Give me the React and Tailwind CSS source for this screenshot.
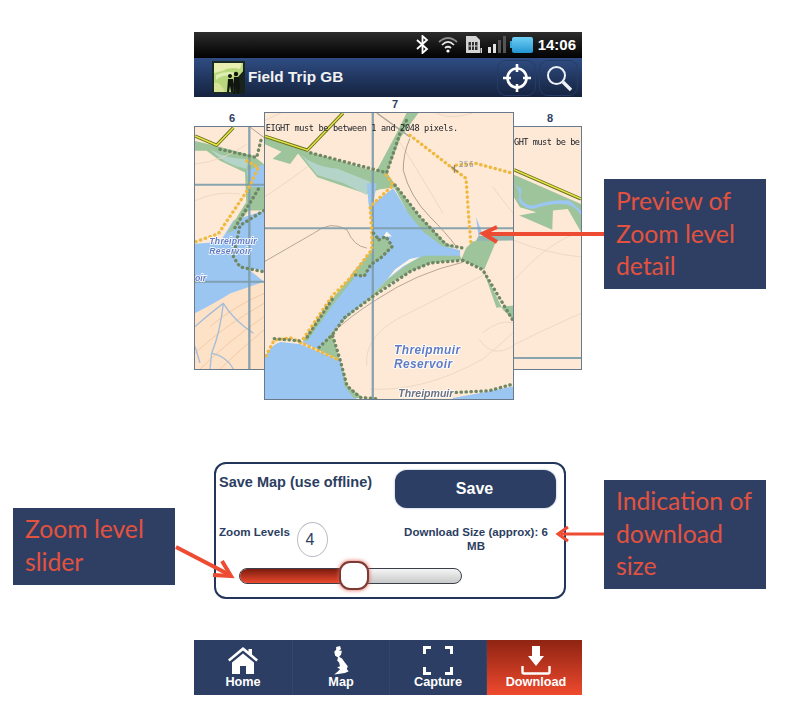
import React from "react";

const WATER = "#9cc6f2";
const GREEN = "#9dc49a";
const BG = "#fde9d6";
const DOT = "#6f8763";
const ORG = "#efb93f";
const GRID = "#7d9dab";

function Line({ d, c = DOT, w = 10, dash = "1 14", fill = "none" }) {
  return <path d={d} fill={fill} stroke={c} strokeWidth={w} strokeDasharray={dash} strokeLinecap="round" strokeLinejoin="round" />;
}

function Contour({ d, c = "#e9d5c0", w = 2.5 }) {
  return <path d={d} fill="none" stroke={c} strokeWidth={w} />;
}

function Road({ d }) {
  return (
    <g fill="none" strokeLinejoin="round">
      <path d={d} stroke="#66701c" strokeWidth="10" />
      <path d={d} stroke="#e7e544" strokeWidth="4.5" />
    </g>
  );
}

function MapCentre() {
  return (
    <svg viewBox="222 38 750 862" preserveAspectRatio="none" className="block w-full h-full blur-[0.35px]">
      <rect x="222" y="38" width="750" height="862" fill={BG} />
      <Contour d="M222 60 L270 38 M740 38 Q780 60 850 38 M880 700 Q930 660 972 670 M530 800 Q520 720 620 660 Q760 590 895 520 M910 260 Q940 300 972 340 M870 720 Q910 780 972 740 M540 870 Q700 880 880 780 Q930 740 972 700" />
      <Contour d="M222 290 Q300 240 390 170 M620 110 Q690 220 760 340" c="#e8d4c0" />
      <path d="M222 110 L350 155 L550 212 L590 218 L622 262 L570 268 L530 282 L380 232 L322 160 L298 192 L245 176 L272 155 L222 132 Z" fill={GREEN} />
      <path d="M330 162 Q370 200 440 205 L540 245 L530 285 L460 250 L380 225 Z" fill="#b4d3c9" />
      <path d="M558 215 L622 95 L650 38 L686 38 L632 112 L592 218 Z" fill={GREEN} />
      <path d="M222 775 Q240 735 270 728 L330 735 L450 785 L465 860 L500 900 L222 900 Z" fill={WATER} />
      <path d="M530 250 L560 250 L550 310 L610 265 L650 330 L700 385 L770 440 L812 452 L812 470 L702 470 L662 490 L592 540 L547 585 L502 625 L427 695 L382 750 L335 730 L432 595 L482 530 L547 450 L547 385 L535 310 Z" fill={WATER} />
      <path d="M610 258 L622 262 L690 350 L770 430 L800 445 L760 440 L700 395 L655 340 Z" fill={GREEN} />
      <path d="M547 405 L567 420 L587 410 L607 440 L572 475 L542 495 L522 530 L482 525 L547 450 Z" fill={GREEN} />
      <path d="M850 425 L925 415 L885 510 L815 480 L830 445 Z" fill={GREEN} />
      <path d="M812 468 L702 468 L662 488 L592 540 L547 585 L502 625 L427 695 L382 752 L447 782 L427 710 L437 690 L462 655 L547 592 L587 560 L662 515 L722 490 L817 480 Z" fill={GREEN} />
      <path d="M592 538 L640 500 L690 472 L660 478 L615 510 Z" fill="#fff6e8" />
      <path d="M482 530 L432 590 L337 725 L350 725 L432 610 L492 535 Z" fill={GREEN} />
      <path d="M880 505 L922 625 L972 618 L972 660 L942 632 Z" fill={GREEN} />
      <path d="M450 785 L470 860 L520 897 L490 897 L462 860 Z" fill={GREEN} />
      <path d="M790 897 Q880 882 972 862 L972 900 L790 900 Z" fill={WATER} />
      <path d="M590 395 L606 410 L580 410 Z" fill="#fff8ee" />
      <path d="M860 350 L878 398 L868 412 Z" fill={WATER} />
      <path d="M868 408 L972 408 L972 422 L860 424 Z" fill="#8fb7b0" />
      <Contour d="M222 485 Q300 440 370 400 Q420 360 470 390 Q490 440 530 445" c="#a89a88" />
      <Contour d="M660 115 Q640 160 640 210 Q660 290 720 350 Q770 400 800 440" c="#a28f80" />
      <Contour d="M427 700 Q480 650 560 600 Q680 520 820 488" c="#ab9a86" />
      <path d="M548 38 V900" stroke={GRID} strokeWidth="7" opacity="0.9" />
      <path d="M222 385 H972" stroke={GRID} strokeWidth="6" opacity="0.9" />
      <path d="M560 38 L660 110" stroke="#a9a39a" strokeWidth="4" fill="none" />
      <Road d="M222 108 L350 150 L458 38" />
      <Line c={ORG} d="M660 105 L790 205 L830 235 L838 350 L845 435 M800 195 L860 190 L972 220 M590 225 L610 255 L540 320 L545 400 L545 450 L480 535 L425 590 L330 730 M225 770 L250 722 L300 716 L450 785" />
      <Line d="M360 158 L590 218 L630 100 L650 60 M615 255 L690 350 L770 435 L820 445 M567 420 L587 410 L607 440 L572 475 L542 495 L522 530 L482 525 M550 400 L567 420 M820 482 L722 490 L662 515 L547 592 L462 655 L427 705 L385 745 M425 600 L345 720 M820 482 L880 510 L970 660 M427 710 L450 785 L470 860 L510 895 L560 899 M800 880 L900 875 L972 855 M250 718 L330 725" />
      <path d="M785 200 L805 215 M795 195 L795 218" stroke="#8d8560" strokeWidth="4" />
      <text x="808" y="202" fontSize="24" fill="#8d9aa0" fontFamily="'DejaVu Sans Mono', monospace" letterSpacing="1">256</text>
      <text x="224" y="92" fontSize="26" fill="#20242a" fontFamily="'DejaVu Sans Mono', monospace" textLength="582">EIGHT must be between 1 and 2048 pixels.</text>
      <g fontFamily="'Liberation Sans', sans-serif" fontStyle="italic" fontWeight="700" stroke="#fff" strokeWidth="5" paintOrder="stroke">
        <text x="612" y="765" fontSize="36" fill="#5f7bc4" textLength="200">Threipmuir</text>
        <text x="612" y="808" fontSize="36" fill="#5f7bc4" textLength="176">Reservoir</text>
        <text x="625" y="894" fontSize="32" fill="#6c7180">Threipmuir</text>
      </g>
    </svg>
  );
}

function MapLeft() {
  return (
    <svg viewBox="15 78 207 730" preserveAspectRatio="none" className="block w-full h-full blur-[0.35px]">
      <rect x="15" y="78" width="207" height="730" fill={BG} />
      <path d="M15 120 L80 135 L190 165 L222 190 L222 330 L170 330 L165 215 L90 180 L50 150 L15 150 Z" fill={GREEN} />
      <path d="M170 210 L222 190 L222 260 L180 260 Z" fill={WATER} />
      <path d="M60 145 Q110 175 175 175 L170 205 Q100 190 60 145 Z" fill="#b4d3c9" />
      <path d="M15 430 L90 425 L130 360 L222 330 L222 510 L150 500 L130 470 L222 545 L222 545 L15 640 Z" fill={WATER} />
      <path d="M110 400 L165 310 L205 265 L205 290 L130 390 Z" fill={GREEN} />
      <path d="M15 640 Q90 600 120 580 L222 545 L222 808 L15 808 Z" fill="#fde2c8" />
      <g fill="none" strokeWidth="2.5" stroke="#f1c49d">
        <path d="M15 760 Q100 680 222 610 M30 808 Q120 720 222 650 M90 808 Q150 750 222 690 M60 680 Q130 620 222 580" />
      </g>
      <g fill="none" strokeWidth="4" stroke="#a7bdd5">
        <path d="M15 680 Q60 640 100 610 Q130 660 190 700 M100 610 Q90 700 65 760 L60 808 M65 760 Q110 770 130 808 M15 740 L30 790" />
      </g>
      <Contour d="M15 190 Q100 180 170 130 M15 300 Q80 270 150 280" />
      <path d="M178 78 V808" stroke={GRID} strokeWidth="7" opacity="0.9" />
      <path d="M15 252 H222 M15 545 H222" stroke={GRID} strokeWidth="6" opacity="0.9" />
      <path d="M180 78 L222 110" stroke="#a9a39a" strokeWidth="3" fill="none" />
      <Road d="M15 105 L80 133 L130 80" />
      <Line c={ORG} d="M170 180 L205 200 L175 265 L85 400 L15 425" />
      <Line d="M90 145 L200 170 L215 110 M205 265 L130 390 M222 330 L150 375 L130 470 L150 500 L222 515" />
      <g fontFamily="'Liberation Sans', sans-serif" fontStyle="italic" fontWeight="700" stroke="#fff" strokeWidth="4" paintOrder="stroke" fill="#5f7bc4" fontSize="26">
        <text x="58" y="431" textLength="142">Threipmuir</text>
        <text x="58" y="461" textLength="125">Reservoir</text>
        <text x="15" y="542">oir</text>
      </g>
    </svg>
  );
}

function MapRight() {
  return (
    <svg viewBox="972 78 203 730" preserveAspectRatio="none" className="block w-full h-full blur-[0.35px]">
      <rect x="972" y="78" width="203" height="730" fill={BG} />
      <path d="M972 222 L1175 310 L1175 395 L1135 325 L1090 330 L1088 388 L988 345 L1040 335 L990 320 L972 290 Z" fill={GREEN} />
      <path d="M972 250 Q995 270 985 300 Q1000 325 1030 325 Q1090 305 1135 312 Q1160 320 1175 345 L1175 330 L1140 300 Q1090 295 1030 315 Q1000 315 992 290 L995 265 Z" fill={WATER} />
      <Contour d="M972 540 Q1080 420 1175 395 M1175 640 Q1060 690 880 780 M972 420 Q1070 460 1175 470" />
      <path d="M972 775 H1175" stroke={GRID} strokeWidth="6" opacity="0.9" />
      <Road d="M972 207 L1175 295" />
      <text x="972" y="132" fontSize="26" fill="#20242a" fontFamily="'DejaVu Sans Mono', monospace" textLength="200">GHT must be be</text>
    </svg>
  );
}

function Logo() {
  return (
    <svg viewBox="0 0 33 33" className="w-[33px] h-[33px] block">
      <rect width="33" height="33" fill="#b9d77d" />
      <path d="M2 2 H30 L28 8 Q18 5 10 10 L2 12 Z" fill="#e8efb0" />
      <path d="M4 14 Q14 9 24 12 L20 15 Q10 13 4 19 Z" fill="#dfeeb4" />
      <path d="M2 22 Q8 20 13 31 H2 Z" fill="#d8e39a" />
      <path d="M0 0 H33 V33 H0 Z M2 2 V31 H31 V2 Z" fill="#1c2a24" fillRule="evenodd" />
      <path d="M33 8 V33 H21 L26 16 Z" fill="#17231c" />
      <circle cx="18" cy="15" r="2" fill="#10160f" />
      <path d="M16 18 h5 l1 6 l-1 7 h-2 l-1 -6 l-1 6 h-2 Z" fill="#10160f" />
      <circle cx="24" cy="13" r="2.2" fill="#10160f" />
      <path d="M22 16 h5 l1 9 l-1 8 h-2 l-1 -8 l-1 8 h-2 Z" fill="#10160f" />
    </svg>
  );
}

function StatusIcons() {
  return (
    <>
      <svg viewBox="0 0 13 19" className="w-[13px] h-[19px]" fill="none" stroke="#fff" strokeWidth="1.8">
        <path d="M1 5 L11 14 L6.5 18 V1 L11 5 L1 14" />
      </svg>
      <svg viewBox="0 0 20 17" className="w-[20px] h-[17px] ml-[9px]" fill="none" stroke="#e8e8e8" strokeWidth="1.7">
        <path d="M1 6 Q10 -2 19 6" stroke="#8b8b8b" />
        <path d="M4 9 Q10 3 16 9" />
        <path d="M7 12 Q10 9.5 13 12" />
        <circle cx="10" cy="15" r="1.6" fill="#fff" stroke="none" />
      </svg>
      <svg viewBox="0 0 16 17" className="w-[16px] h-[17px] ml-[8px]">
        <path d="M0 0 H10 L14 4 V17 H0 Z" fill="#d4d4d4" />
        <rect x="2.5" y="6" width="9" height="8" fill="#303030" />
        <path d="M5.5 6 V14 M8.5 6 V14 M2.5 10 H11.5" stroke="#d4d4d4" strokeWidth="1" />
        <rect x="14.5" y="12" width="1.5" height="5" fill="#d4d4d4" />
      </svg>
      <svg viewBox="0 0 19 17" className="w-[19px] h-[17px] ml-[6px]">
        <rect x="0" y="11" width="3" height="6" fill="#e0e0e0" />
        <rect x="5" y="8" width="3" height="9" fill="#e0e0e0" />
        <rect x="10" y="4" width="3" height="13" fill="#555" />
        <rect x="15" y="0" width="3" height="17" fill="#555" />
      </svg>
      <div className="ml-[3px] flex items-center">
        <div className="w-[2px] h-[7px] bg-[#38a9dc]" />
        <div className="w-[21px] h-[16px] rounded-[2px] bg-gradient-to-b from-[#6fd0f5] to-[#1f95d2]" />
      </div>
      <span className="ml-[5px] text-[15px] font-bold text-white leading-none">14:06</span>
    </>
  );
}

function HeaderBtn({ children }) {
  return <div className="w-[39px] h-[36px] rounded-[9px] border border-[#263c64] flex items-center justify-center">{children}</div>;
}

function Arrows() {
  const c = "#ee4b33";
  return (
    <svg viewBox="0 0 786 721" className="absolute inset-0 w-[786px] h-[721px] pointer-events-none" fill="none" stroke={c}>
      <path d="M604 234 H486" strokeWidth="4" />
      <path d="M497 227 L483 233.5 L497 242" strokeWidth="4" />
      <path d="M604 534 H561" strokeWidth="3" />
      <path d="M568 527 L558 534 L568 541" strokeWidth="3" />
      <path d="M176 547 L228 574" strokeWidth="4" />
      <path d="M222 561 L231 576 L213 575" strokeWidth="4" />
    </svg>
  );
}

function Note({ className, lines }) {
  return (
    <div className={"absolute bg-[#2f3f63] text-[#e2523f] text-[24.7px] leading-[32.5px] font-['Lato','Noto_Sans',sans-serif] " + className}>
      {lines.map((l) => <div key={l}>{l}</div>)}
    </div>
  );
}

function Tab({ label, active, className, children }) {
  return (
    <div className={"flex flex-col items-center pt-[6px] " + (active ? "bg-gradient-to-b from-[#8f2412] to-[#ef4a2e] " : "border-r border-[#33476d] ") + className}>
      <div className="h-[29px] flex items-center justify-center">{children}</div>
      <span className="text-[12.7px] leading-[14px] font-bold text-white">{label}</span>
    </div>
  );
}

export default function App() {
  return (
    <div className="relative w-[786px] h-[721px] bg-white overflow-hidden font-['Liberation_Sans',Arial,sans-serif]">
      <div className="ml-[194px] w-[388px] pt-[32px] flex flex-col">
        <div className="h-[25px] bg-gradient-to-b from-[#2d2d2d] to-[#050505] flex items-center justify-end pr-[6px]">
          <StatusIcons />
        </div>
        <div className="h-[40px] bg-gradient-to-b from-[#2f4d84] to-[#15233f] border-t border-black flex items-center pl-[18px] pr-[4px]">
          <Logo />
          <span className="ml-[3px] text-[15.3px] font-bold text-[#f2f2f2]">Field Trip GB</span>
          <div className="ml-auto flex gap-[3px]">
            <HeaderBtn>
              <svg viewBox="0 0 30 30" className="w-[30px] h-[30px]" fill="none" stroke="#fff" strokeWidth="2.6">
                <circle cx="15" cy="15" r="9.5" />
                <path d="M15 1 V9 M15 21 V29 M1 15 H9 M21 15 H29" />
              </svg>
            </HeaderBtn>
            <HeaderBtn>
              <svg viewBox="0 0 28 28" className="w-[28px] h-[28px]" fill="none" stroke="#eef2f7">
                <circle cx="11.5" cy="11.5" r="8.5" strokeWidth="2" />
                <path d="M18 18 L26 26" strokeWidth="3.4" />
              </svg>
            </HeaderBtn>
          </div>
        </div>

        <div className="flex items-start h-[303px]">
          <div className="w-[70px] pt-[14px]">
            <div className="h-[15px] text-center text-[11px] leading-[15px] font-bold text-[#2c3e63] pl-[6px]">6</div>
            <div className="h-[244px] border border-[#6b7a8a] border-r-0 overflow-hidden">
              <MapLeft />
            </div>
          </div>
          <div className="w-[250px]">
            <div className="h-[15px] text-center text-[11px] leading-[15px] font-bold text-[#2c3e63] pl-[12px]">7</div>
            <div className="h-[288px] border border-[#6b7a8a] overflow-hidden">
              <MapCentre />
            </div>
          </div>
          <div className="w-[68px] pt-[14px]">
            <div className="h-[15px] text-center text-[11px] leading-[15px] font-bold text-[#2c3e63] pl-[4px]">8</div>
            <div className="h-[244px] border border-[#6b7a8a] border-l-0 overflow-hidden">
              <MapRight />
            </div>
          </div>
        </div>

        <div className="mt-[62px] ml-[20px] w-[352px] h-[137px] rounded-[12px] border-2 border-[#22355a] pl-[3px] pr-[8px] pt-[6px] text-[#2c3e5f]">
          <div className="flex justify-between h-[38px]">
            <span className="text-[14.5px] leading-[16px] font-bold mt-[4px]">Save Map (use offline)</span>
            <div className="w-[161px] h-[38px] rounded-[12px] bg-[#2c3e63] shadow-[0_0_2px_#8fa0bd] flex items-center justify-center text-white text-[16px] font-bold pr-[2px]">Save</div>
          </div>
          <div className="flex mt-[14px] h-[35px]">
            <span className="w-[71px] text-[11.6px] leading-[14px] font-bold mt-[3px] whitespace-nowrap">Zoom Levels</span>
            <div className="ml-[7px] w-[31px] h-[35px] rounded-[50%] border border-[#b9bdc4] flex items-center justify-center text-[16px] text-[#2c3e5f] pr-[5px]">4</div>
            <div className="ml-auto w-[160px] text-center text-[11.5px] leading-[14px] font-bold mt-[3px]">
              <div>Download Size (approx): 6</div>
              <div>MB</div>
            </div>
          </div>
          <div className="relative ml-[20px] mt-[4px] w-[223px] h-[29px] flex items-center">
            <div className="w-full h-[16px] rounded-full border border-[#3a3f4a] bg-gradient-to-b from-[#f5f5f5] to-[#c9c9c9] overflow-hidden">
              <div className="w-[105px] h-full bg-gradient-to-b from-[#7c1c10] to-[#ee4a2e]" />
            </div>
            <div className="absolute left-[100px] top-0 w-[30px] h-[29px] rounded-[11px] bg-white border-2 border-[#7d3a34] shadow-[0_0_4px_#e0584a]" />
          </div>
        </div>

        <div className="mt-[41px] h-[55px] bg-[#2c3e63] flex">
          <Tab label="Home" className="w-[99px]">
            <svg viewBox="0 0 30 27" className="w-[30px] h-[27px]" fill="#fff">
              <path d="M15 0 L20.5 4.6 V2 H24 V7.5 L30 12.5 L28.4 14.6 L15 3.6 L1.6 14.6 L0 12.5 Z" />
              <path d="M15 6.5 L26 15.5 V27 H18 V19 H12 V27 H4 V15.5 Z" />
            </svg>
          </Tab>
          <Tab label="Map" className="w-[97px]">
            <svg viewBox="0 0 20 30" className="w-[20px] h-[29px]" fill="#fff">
              <path d="M5 1 L9 0 L10 3 L8 5 L11 5 L10 9 L8 11 L11 13 L14 17 L17 21 L16 24 L18 26 L14 28 L7 29 L3 29.5 L7 26 L9 24 L6 22 L9 21 L8 17 L6 15 L7 12 L4 10 L3 6 L5 4 Z" />
            </svg>
          </Tab>
          <Tab label="Capture" className="w-[97px]">
            <svg viewBox="0 0 30 29" className="w-[30px] h-[29px]" fill="none" stroke="#fff" strokeWidth="3">
              <path d="M1.5 8 V1.5 H8 M22 1.5 H28.5 V8 M1.5 21 V27.5 H8 M22 27.5 H28.5 V21" />
            </svg>
          </Tab>
          <Tab label="Download" active className="w-[95px] pl-[3px]">
            <svg viewBox="0 0 30 29" className="w-[30px] h-[29px]" fill="#fff">
              <path d="M11 0 H19 V10 H23 L15 20 L7 10 H11 Z" />
              <path d="M1.5 20 V26 Q1.5 27.5 3 27.5 H27 Q28.5 27.5 28.5 26 V20" fill="none" stroke="#fff" strokeWidth="2.4" />
            </svg>
          </Tab>
        </div>
      </div>

      <Arrows />
      <Note className="left-[604px] top-[179px] w-[162px] h-[110px] pl-[12px] pt-[6px]" lines={["Preview of", "Zoom level", "detail"]} />
      <Note className="left-[604px] top-[480px] w-[162px] h-[109px] pl-[12px] pt-[5px]" lines={["Indication of", "download", "size"]} />
      <Note className="left-[13px] top-[508px] w-[162px] h-[77px] pl-[12px] pt-[5px]" lines={["Zoom level", "slider"]} />
    </div>
  );
}
